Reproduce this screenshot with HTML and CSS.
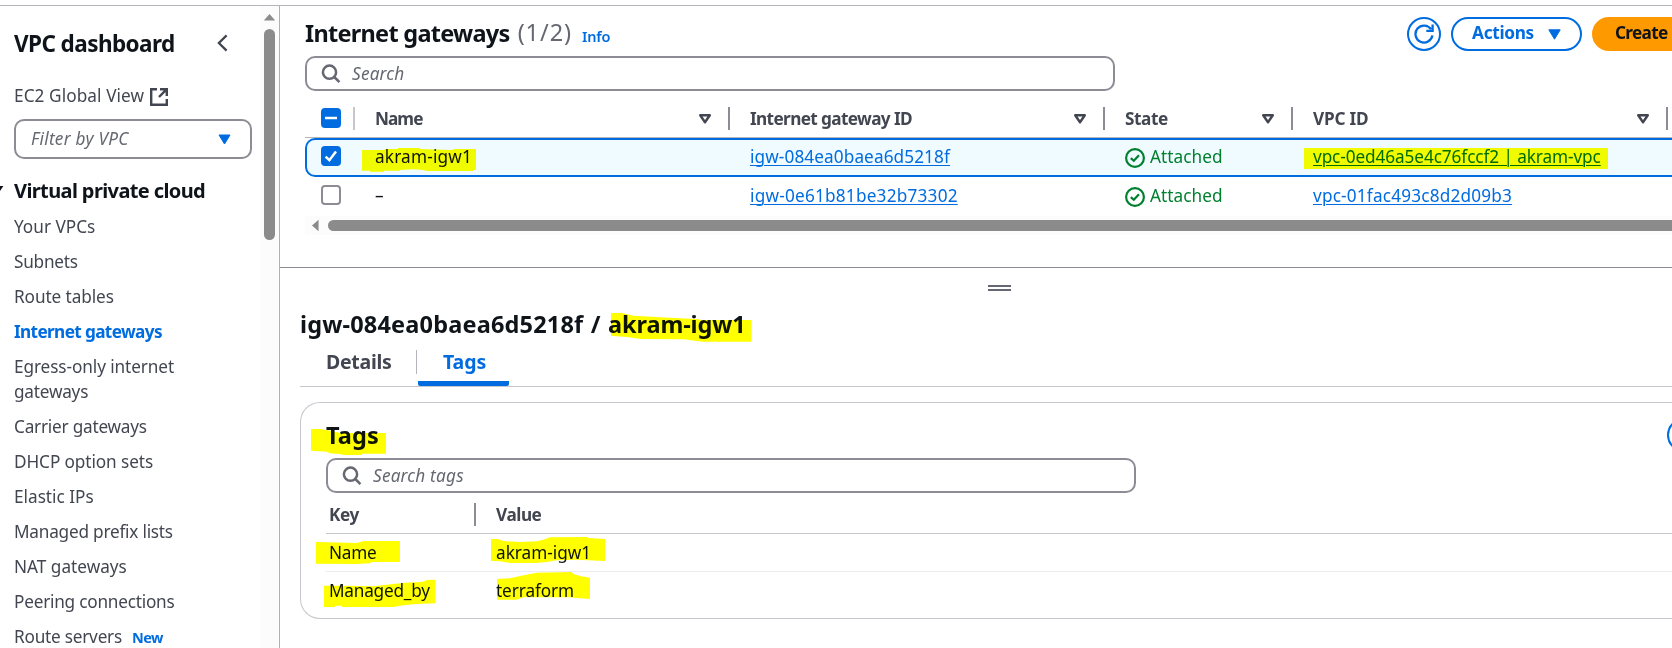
FILE: index.html
```html
<!DOCTYPE html>
<html lang="en">
<head>
<meta charset="utf-8">
<title>Internet gateways | VPC</title>
<link rel="stylesheet" href="styles.css">
</head>
<body>
<svg class="defs" aria-hidden="true">
  <symbol id="search" viewBox="0 0 20 20"><circle cx="8.500" cy="8.200" r="6.600"/><path d="M13.300 13 18.400 18.100"/></symbol>
  <symbol id="sort" viewBox="0 0 14 12"><path d="M2.200 2.200h9.600L7 9.200z"/></symbol>
  <symbol id="ok" viewBox="0 0 20 20"><circle cx="10" cy="10" r="8.900"/><path d="M5.800 10.200 8.800 12.800 14 7.200"/></symbol>
</svg>

<div class="topbar"></div>
<div class="app">
  <aside class="sidebar">
    <div class="side-body">
      <header class="side-head">
        <h2>VPC dashboard</h2>
        <svg class="chevron" viewBox="0 0 11 18"><path d="M9.600 1.400 1.900 9l7.700 7.600"/></svg>
      </header>
      <a class="global">EC2 Global View
        <svg viewBox="0 0 18 18"><path d="M7 1.200H1.200v15.600h15.600V11M10 1.200h6.800V8M16.800 1.200 9 9"/></svg>
      </a>
      <div class="filter"><i>Filter by VPC</i><svg viewBox="0 0 13 11"><path d="M1 1h11L6.500 10z"/></svg></div>
      <h3><svg viewBox="0 0 12 10"><path d="M0 0h12L6 9z"/></svg>Virtual private cloud</h3>
      <ul>
        <li class="n0">Your VPCs</li>
        <li class="n2">Subnets</li>
        <li class="n1">Route tables</li>
        <li class="active">Internet gateways</li>
        <li class="n1">Egress-only internet<br><span class="n2">gateways</span></li>
        <li class="n2">Carrier gateways</li>
        <li class="n1">DHCP option sets</li>
        <li class="n0">Elastic IPs</li>
        <li class="n2">Managed prefix lists</li>
        <li class="n0">NAT gateways</li>
        <li class="n2">Peering connections</li>
        <li class="n2">Route servers<b>New</b></li>
      </ul>
    </div>
    <div class="vtrack"><svg viewBox="0 0 13 8"><path d="M0 7.500 6.500 0 13 7.500z"/></svg><div class="vthumb"></div></div>
  </aside>

  <main>
    <section class="list">
      <div class="list-head">
        <h1>Internet gateways</h1><span class="count">(1/2)</span><a class="info">Info</a>
        <div class="actions">
          <button class="btn round"><svg viewBox="0 0 20 20"><path d="M17 5.200A8.500 8.500 0 1 0 18.400 11.400M18.600 .5v6.300h-6.300"/></svg></button>
          <button class="btn menu">Actions<svg viewBox="0 0 13 11"><path d="M.8.8h11.400L6.500 10.200z"/></svg></button>
          <button class="btn primary">Create</button>
        </div>
      </div>
      <div class="search"><svg><use href="#search"/></svg><i>Search</i></div>

      <div class="grid head">
        <div class="cell check"><span class="box on"><svg viewBox="0 0 20 20"><path d="M4 10h12"/></svg></span></div>
        <div class="cell"><span class="h-name">Name</span><svg class="sort"><use href="#sort"/></svg></div>
        <div class="cell">Internet gateway ID<svg class="sort"><use href="#sort"/></svg></div>
        <div class="cell"><span class="h-state">State</span><svg class="sort"><use href="#sort"/></svg></div>
        <div class="cell"><span class="h-vpc">VPC ID</span><svg class="sort"><use href="#sort"/></svg></div>
      </div>
      <div class="grid row selected">
        <div class="cell check"><span class="box on"><svg viewBox="0 0 20 20"><path d="M4.600 10.600 8.400 14.200 15 5.600"/></svg></span></div>
        <div class="cell p2">akram-igw1</div>
        <div class="cell"><a class="id1">igw-084ea0baea6d5218f</a></div>
        <div class="cell ok"><svg><use href="#ok"/></svg>Attached</div>
        <div class="cell"><a class="n1">vpc-0ed46a5e4c76fccf2 | akram-vpc</a></div>
      </div>
      <div class="grid row">
        <div class="cell check"><span class="box"></span></div>
        <div class="cell">–</div>
        <div class="cell"><a class="id2">igw-0e61b81be32b73302</a></div>
        <div class="cell ok"><svg><use href="#ok"/></svg>Attached</div>
        <div class="cell"><a class="p2">vpc-01fac493c8d2d09b3</a></div>
      </div>
      <div class="htrack"><svg viewBox="0 0 8 13"><path d="M7.500 0 0 6.500 7.500 13z"/></svg><div class="hthumb"></div></div>
    </section>

    <section class="detail">
      <div class="handle"></div>
      <h1 class="title"><span>igw-084ea0baea6d5218f</span> / akram-igw1</h1>
      <nav class="tabs"><a>Details</a><a class="current">Tags</a></nav>
      <div class="card">
        <div class="card-head"><h1>Tags</h1><svg class="edit" viewBox="0 0 6 34"><path d="M18 1a16 16 0 0 0 0 32"/></svg></div>
        <div class="search tags-search"><svg><use href="#search"/></svg><i>Search tags</i></div>
        <div class="kv kv-head"><span>Key</span><span>Value</span></div>
        <div class="kv"><span class="n2">Name</span><span class="n0">akram-igw1</span></div>
        <div class="kv"><span class="n2">Managed_by</span><span class="n1">terraform</span></div>
      </div>
    </section>
  </main>
</div>

<svg class="marker" viewBox="0 0 1672 648" aria-hidden="true">
  <g transform="translate(280 0) scale(.33333)"><path d="M246 450h68v-3h40v-3h66v3l96 3 9-3h63v63h-8v3H440l-10-3-30-2-40 2v2h-48v3h-42v-3h-24z"/></g>
  <g transform="translate(1200 0) scale(.33333)"><path d="M312 444h912v63H312z"/></g>
  <g transform="translate(280 290) scale(.33333)">
    <path d="M993 69h33l34 8 80 5 120 6v2h154v65h-146l-18-2-38-5-129-1-43-6-30-2-17-2z"/>
    <path d="M93 417h27l20 3 28 6 12 3h138v62h-72v4h-56l-10-3-30-2-10-5-47-3z"/>
  </g>
  <g transform="translate(290 440) scale(.33333)">
    <path d="M78 306 200 309 222 303H330V366H246L240 370 200 372 78 371z"/>
    <path d="M603 297H625L640 303 690 306 740 304 760 299 780 292 890 291 895 294 945 297V363L860 359 800 361 770 366 740 369H660L630 364 603 363z"/>
    <path d="M102 437H160L250 439 310 432 345 428 400 425 410 420 436 419V490L380 492 340 496 310 501H156V497H135V501H102z"/>
    <path d="M621 417 660 415 690 408 740 398 845 396 850 402 870 408 900 413V477L860 474 840 472H700L680 479H621z"/>
  </g>
</svg>
</body>
</html>
```
FILE: styles.css
```css
* { box-sizing: border-box; }
body {
  margin: 0; width: 1672px; height: 648px; overflow: hidden; position: relative;
  display: flex; flex-direction: column; background: #fff; color: #0f141a;
  font: 400 17.2px/25px "Noto Sans", "Open Sans", sans-serif; letter-spacing: -.1px;
}
h1, h2, h3, ul { margin: 0; padding: 0; }
h1 { font-size: 23.5px; line-height: 34px; font-weight: 700; letter-spacing: -.72px; }
svg { display: block; flex: none; fill: none; stroke: currentColor; }
.defs { display: none; }
.n0 { letter-spacing: 0; }
.n1 { letter-spacing: -.09px; }
.n2 { letter-spacing: -.22px; }
.p2 { letter-spacing: .18px; }
.id1 { letter-spacing: .1px; }
.id2 { letter-spacing: .22px; }

.topbar { flex: none; height: 6px; border-bottom: 1px solid #b4b4bb; }
.app { flex: 1; display: flex; min-height: 0; }

/* Sidebar */
.sidebar { flex: none; width: 280px; display: flex; border-right: 1px solid #b0b0b4; overflow: hidden; }
.side-body { width: 260px; padding: 24px 0 0 14px; color: #424650; white-space: nowrap; }
.side-head { display: flex; justify-content: space-between; align-items: center; height: 28px; padding-right: 32px; }
.side-head h2 { font-size: 22.5px; line-height: 28px; font-weight: 700; letter-spacing: -.57px; color: #0f141a; }
.chevron { width: 11px; height: 18px; margin-top: -2px; stroke-width: 2.300; color: #424650; }
.global { display: flex; align-items: center; gap: 6px; height: 24px; margin-top: 25px; letter-spacing: .09px; }
.global svg { width: 18px; height: 18px; stroke-width: 2.400; margin-top: 4px; }
.filter {
  display: flex; justify-content: space-between; align-items: center; width: 238px; height: 40px; margin-top: 12px;
  padding: 0 19px 0 15px; border: 2px solid #8c8c94; border-radius: 10px; color: #656871; letter-spacing: .27px;
}
.filter svg { width: 13px; height: 11px; fill: #006ce0; stroke: #006ce0; stroke-linejoin: round; }
.filter i { margin-top: -2px; }
.sidebar h3 {
  display: flex; align-items: center; height: 24px; margin: 19px 0 12px -8px;
  font-size: 20px; font-weight: 700; letter-spacing: -.61px; color: #0f141a;
}
.sidebar h3 svg { width: 12px; height: 9px; margin: 0 10px 0 -14px; fill: #0f141a; stroke: none; }
.sidebar ul { list-style: none; display: flex; flex-direction: column; gap: 10px; }
.sidebar .active { color: #006ce0; font-weight: 700; letter-spacing: -.63px; }
.sidebar li b { margin-left: 10px; color: #006ce0; font-size: 14.5px; font-weight: 700; letter-spacing: -.6px; }
.vtrack { width: 19px; padding: 8px 4px 0; background: #fcfcfc; }
.vtrack svg { width: 13px; height: 7px; margin-left: -1px; fill: #8b8b8b; stroke: none; }
.vthumb { width: 11px; height: 211px; margin-top: 8px; border-radius: 6px; background: #8b8b8b; }

/* Gateway list */
main { flex: 1; min-width: 0; overflow: hidden; display: flex; flex-direction: column; }
.list { flex: none; height: 262px; padding: 11px 0 0 25px; border-bottom: 1px solid #8c8c94; }
.list-head { display: flex; height: 34px; align-items: center; white-space: nowrap; }
.list-head h1 { margin-top: -3px; }
.count { margin: -3px 0 0 8px; font-size: 23.5px; color: #656871; letter-spacing: .95px; }
.info { margin: 4px 0 0 10px; font-size: 14.5px; font-weight: 600; color: #006ce0; letter-spacing: -.2px; }
.actions { display: flex; gap: 10px; margin-left: auto; }
.btn {
  flex: none; height: 34px; display: flex; align-items: center; justify-content: center; padding: 0 0 3px;
  border: 2px solid #006ce0; border-radius: 17px; background: #fff; color: #006ce0;
  font: 700 17.2px/25px "Noto Sans", sans-serif; letter-spacing: -.3px; white-space: nowrap;
}
.round { width: 34px; padding: 0; }
.round svg { width: 20px; height: 20px; stroke-width: 2.300; }
.menu { width: 131px; gap: 14px; }
.menu svg { width: 13px; height: 11px; margin-top: 3px; fill: #006ce0; stroke: #006ce0; stroke-linejoin: round; }
.primary {
  width: 80px; justify-content: flex-start; padding-left: 21px; border-color: #ff9900; border-radius: 17px 0 0 17px;
  background: #ff9900; color: #0f141a; letter-spacing: -.68px;
}
.search {
  display: flex; align-items: center; gap: 11px; width: 810px; height: 35px; margin-top: 5px; padding-left: 14px;
  border: 2px solid #8c8c94; border-radius: 10px; color: #656871; letter-spacing: .2px;
}
.search svg { width: 20px; height: 20px; stroke-width: 2.500; }

.grid { display: grid; grid-template-columns: 50px 375px 375px 188px 375px; }
.cell { display: flex; align-items: center; padding-left: 20px; white-space: nowrap; }
.cell.check { padding-left: 16px; }
.head { height: 47px; padding-top: 9px; border-bottom: 1px solid #b4b4bb; color: #424650; font-weight: 700; letter-spacing: -.62px; }
.head .cell { padding-bottom: 1px; }
.head .cell::after { content: ""; width: 2px; height: 23px; background: #8c8c94; }
.head .check::after { margin-left: auto; background: #c6c6cd; }
.sort { width: 14px; height: 12px; margin: 2px 16px 0 auto; stroke-width: 2.400; stroke-linejoin: round; }
.h-name { letter-spacing: -.95px; }
.h-state { letter-spacing: -.42px; }
.h-vpc { letter-spacing: -.21px; }
.row { height: 39px; }
.row .cell { padding-bottom: 3px; }
.row a { color: #006ce0; text-decoration: underline; text-underline-offset: 2px; text-decoration-thickness: 1px; }
.selected {
  grid-template-columns: 48px 375px 375px 188px 375px;
  border: 2px solid #006ce0; border-right: 0; border-radius: 10px 0 0 10px; background: #f0fbff;
}
.selected .check { padding-left: 14px; }
.row .ok { gap: 5px; color: #00802f; letter-spacing: .06px; }
.ok svg { width: 20px; height: 20px; stroke-width: 2.200; margin-top: 3px; }
.box { width: 20px; height: 20px; border: 2px solid #8c8c94; border-radius: 4px; background: #fff; }
.box.on { border: 0; background: #006ce0; color: #fff; }
.box svg { width: 20px; height: 20px; stroke-width: 2.500; }
.htrack { display: flex; align-items: center; height: 19px; padding-left: 7px; background: #fcfcfc; }
.htrack svg { width: 7px; height: 13px; fill: #8b8b8b; stroke: none; }
.hthumb { flex: 1; height: 11px; margin-left: 9px; border-radius: 6px 0 0 6px; background: #8b8b8b; }

/* Split panel */
.detail { flex: 1; padding: 17px 0 0 20px; display: flex; flex-direction: column; }
.handle { flex: none; width: 23px; height: 6px; margin-left: 688px; border: solid #656871; border-width: 2px 0; }
.title { margin-top: 16px; letter-spacing: -.1px; word-spacing: 1.500px; white-space: nowrap; }
.title span { letter-spacing: .18px; }
.tabs { display: flex; height: 46px; border-bottom: 1px solid #c6c6cd; font-size: 19.5px; font-weight: 700; }
.tabs a { position: relative; height: 45px; padding: 8px 25px 0 26px; color: #424650; letter-spacing: -.28px; }
.tabs a:first-child { width: 118px; }
.tabs a:first-child::after { content: ""; position: absolute; left: 116px; top: 9px; width: 1px; height: 24px; background: #b4b4bb; }
.tabs .current { width: 91px; padding-left: 25px; color: #006ce0; letter-spacing: -.07px; border-bottom: 5px solid #006ce0; border-radius: 0 0 2px 2px; }
.card { height: 217px; margin-top: 15px; padding: 15px 0 0 25px; border: 1px solid #c6c6cd; border-right: 0; border-radius: 20px 0 0 20px; }
.card-head { display: flex; justify-content: space-between; height: 34px; }
.card-head h1 { letter-spacing: .1px; }
.edit { width: 6px; height: 34px; color: #006ce0; stroke-width: 2; }
.tags-search { margin-top: 6px; }
.kv { display: grid; grid-template-columns: 150px 1fr; height: 38px; align-items: center; padding-left: 3px; border-bottom: 1px solid #ebebf0; }
.kv span + span { padding-left: 17px; }
.kv:last-child { border: 0; padding-bottom: 2px; }
.kv-head { height: 41px; padding-top: 3px; border-color: #c6c6cd; color: #424650; font-weight: 700; letter-spacing: -.45px; }
.kv-head span:first-child { display: flex; justify-content: space-between; align-items: center; padding-right: 3px; }
.kv-head span:first-child::after { content: ""; width: 2px; height: 23px; background: #8c8c94; }

/* Highlighter strokes over the page */
.marker { position: absolute; inset: 0; width: 1672px; height: 648px; fill: #ff0; stroke: none; mix-blend-mode: multiply; pointer-events: none; }
```
